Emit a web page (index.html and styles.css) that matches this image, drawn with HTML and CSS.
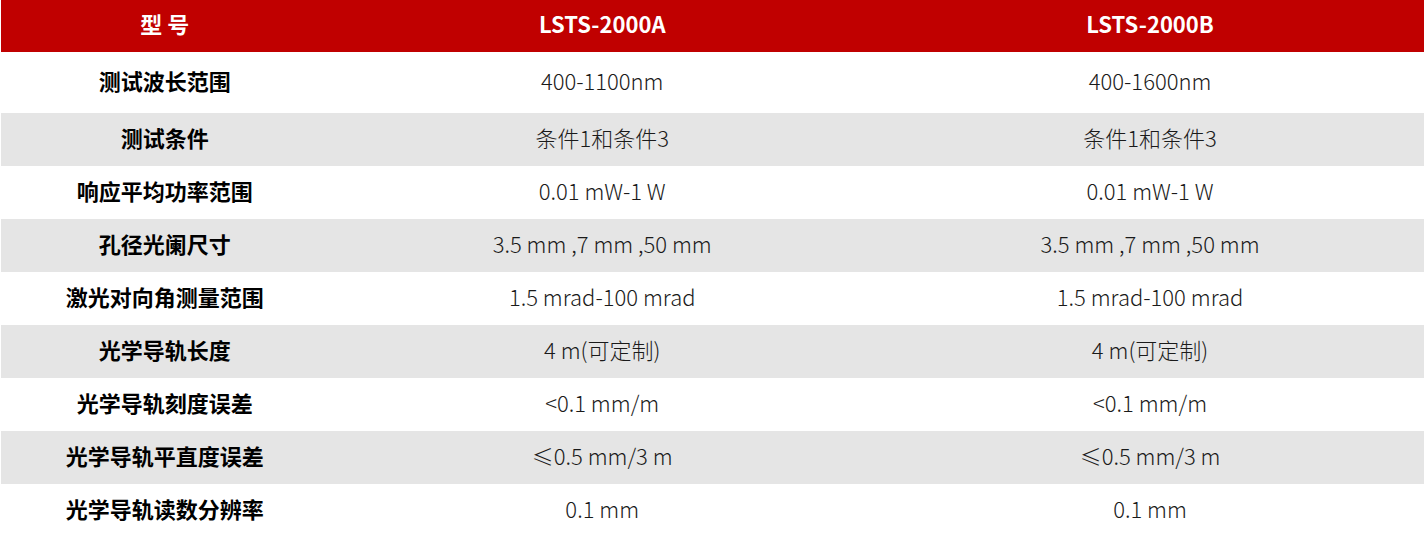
FILE: index.html
```html
<!DOCTYPE html>
<html lang="zh-CN">
<head>
<meta charset="utf-8">
<title>LSTS-2000</title>
<link rel="stylesheet" href="styles.css">
</head>
<body>
<table class="spec">
  <colgroup>
    <col class="c-label">
    <col class="c-val">
    <col class="c-val">
  </colgroup>
  <thead>
    <tr class="head">
      <th>型&nbsp;号</th>
      <th>LSTS-2000A</th>
      <th>LSTS-2000B</th>
    </tr>
  </thead>
  <tbody>
    <tr class="first"><th>测试波长范围</th><td>400-1100nm</td><td>400-1600nm</td></tr>
    <tr class="alt"><th>测试条件</th><td>条件1和条件3</td><td>条件1和条件3</td></tr>
    <tr><th>响应平均功率范围</th><td>0.01 mW-1 W</td><td>0.01 mW-1 W</td></tr>
    <tr class="alt"><th>孔径光阑尺寸</th><td>3.5 mm ,7 mm ,50 mm</td><td>3.5 mm ,7 mm ,50 mm</td></tr>
    <tr><th>激光对向角测量范围</th><td>1.5 mrad-100 mrad</td><td>1.5 mrad-100 mrad</td></tr>
    <tr class="alt"><th>光学导轨长度</th><td>4 m(可定制)</td><td>4 m(可定制)</td></tr>
    <tr><th>光学导轨刻度误差</th><td>&lt;0.1 mm/m</td><td>&lt;0.1 mm/m</td></tr>
    <tr class="alt"><th>光学导轨平直度误差</th><td>≤0.5 mm/3 m</td><td>≤0.5 mm/3 m</td></tr>
    <tr><th>光学导轨读数分辨率</th><td>0.1 mm</td><td>0.1 mm</td></tr>
  </tbody>
</table>
</body>
</html>
```

FILE: styles.css
```css
html, body {
  margin: 0;
  padding: 0;
  background: #ffffff;
}

body {
  padding: 0 0 0 1px;
  font-family: "Noto Sans CJK SC", "Noto Sans", sans-serif;
}

.spec {
  width: 1423px;
  border-collapse: collapse;
  table-layout: fixed;
}

.c-label { width: 23%; }
.c-val { width: 38.5%; }

.spec th,
.spec td {
  padding: 0 0 5px 0;
  text-align: center;
  vertical-align: middle;
  line-height: 1.2;
}

.head {
  height: 52px;
  background: #c00000;
}

.head th {
  color: #ffffff;
  font-size: 22px;
  font-weight: 700;
}

.spec tbody tr {
  height: 53px;
}

.spec tbody tr.first {
  height: 61px;
}

.spec tbody tr.alt {
  background: #e5e5e5;
}

.spec tbody th {
  color: #000000;
  font-size: 22px;
  font-weight: 700;
}

.spec tbody td {
  color: #1a1a1a;
  font-size: 22px;
  font-weight: 300;
}
```
